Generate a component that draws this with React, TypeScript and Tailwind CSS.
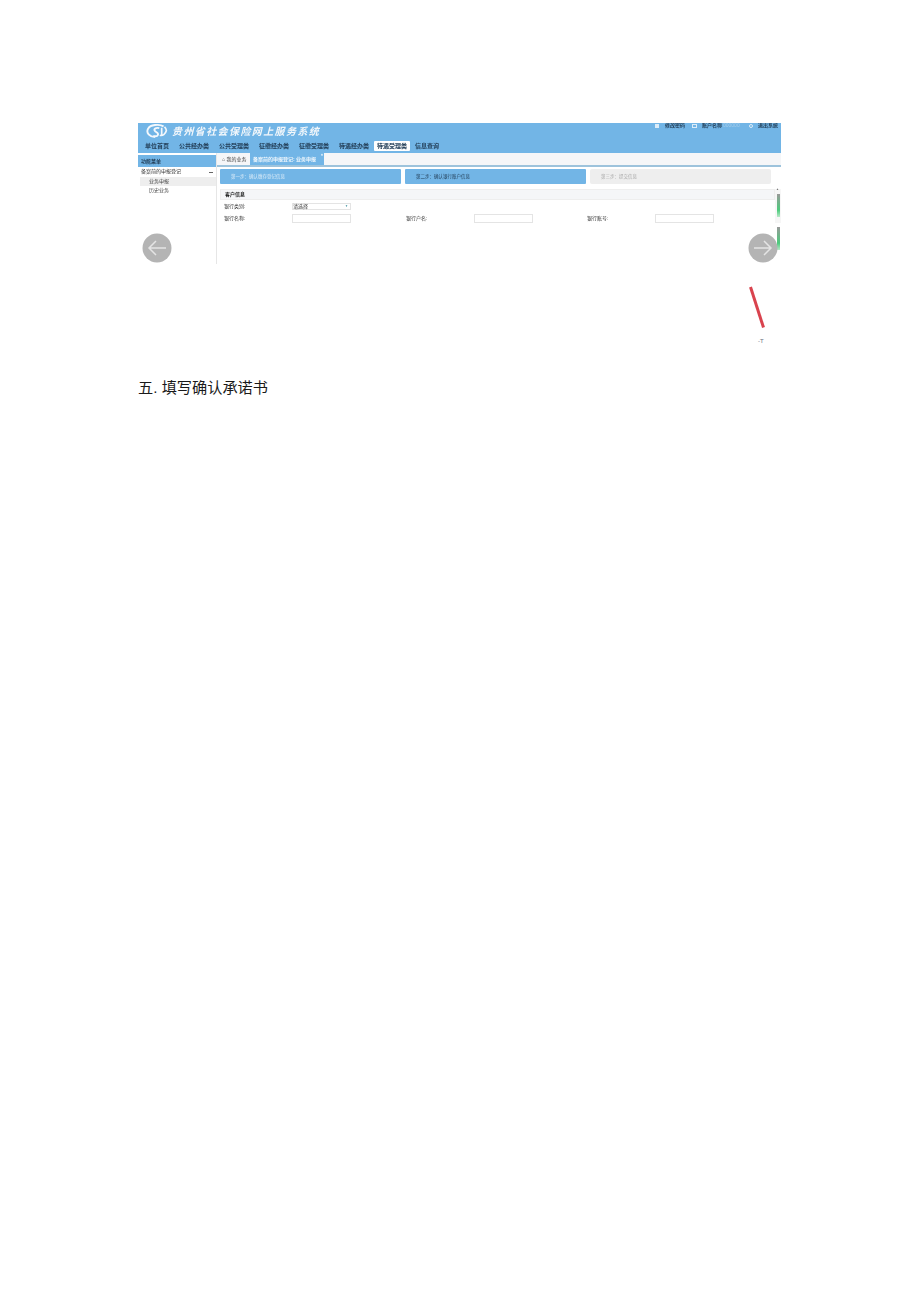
const cjk = "font-['Liberation_Sans','Noto_Sans_CJK_SC',sans-serif]";

const navItems = ["单位首页", "公共经办类", "公共受理类", "征缴经办类", "征缴受理类", "待遇经办类", "待遇受理类", "信息查询"];

function CircleArrow({ dir }: { dir: "left" | "right" }) {
  return (
    <svg width="30" height="30" viewBox="0 0 30 30">
      <circle cx="15" cy="15" r="14.5" fill="#b4b4b4" />
      {dir === "left" ? (
        <path d="M24 15H7M14 8L7 15l7 7" fill="none" stroke="#e4e4e4" strokeWidth="1.500" />
      ) : (
        <path d="M6 15h17M16 8L23 15l-7 7" fill="none" stroke="#e4e4e4" strokeWidth="1.500" />
      )}
    </svg>
  );
}

function Field({ label, className }: { label: string; className: string }) {
  return (
    <div className={`flex items-center ${className}`}>
      <span className="w-[68px] text-[5px] text-[#333]">{label}</span>
      <div className="h-[9px] w-[59px] border border-[#e4e4e4] bg-white" />
    </div>
  );
}

export default function App() {
  return (
    <div className={`${cjk} h-[1301px] w-[920px] overflow-hidden bg-white pl-[138px] pt-[123px]`}>
      <div className="relative h-[141px] w-[643px] overflow-hidden blur-[0.6px]">
        <div className="flex h-[30px] flex-col justify-between bg-[#72b5e6] pb-[2px] pl-[2px]">
          <div className="flex items-start justify-between">
            <div className="flex items-center pt-[1px]">
              <svg width="24" height="15" viewBox="0 0 24 16" className="ml-[5px]">
                <path d="M19 2.500C14 0 5 0.500 2.500 5S4 13.500 10 14" fill="none" stroke="#f4f8fc" strokeWidth="2" />
                <path d="M14.500 4.500C11 3.500 8.500 5 9.500 7S14 9 13 11.500 9 13 8 12.500" fill="none" stroke="#f4f8fc" strokeWidth="2" />
                <path d="M17 4v8M15 12c3 1 6-1 7-5 0-2-1-3-2-4" fill="none" stroke="#f4f8fc" strokeWidth="1.800" />
              </svg>
              <span className="ml-[3px] text-[10px] font-bold italic leading-[13px] tracking-[1.4px] text-[#f2f7fb]">贵州省社会保险网上服务系统</span>
            </div>
            <div className="flex items-center pr-[3px] text-[5px] font-bold leading-[5px] text-[#24405a]">
              <span className="mr-[6px] h-[4px] w-[4px] bg-[#dcecf8]" />
              <span>修改密码</span>
              <span className="ml-[7px] mr-[5px] h-[4px] w-[5px] border border-[#dcecf8]" />
              <span>账户名称</span>
              <span className="ml-[1px] w-[20px] font-normal text-[#a5cdea]">000000</span>
              <span className="ml-[6px] mr-[5px] h-[4px] w-[4px] rounded-full border border-[#dcecf8]" />
              <span>退出系统</span>
            </div>
          </div>
          <div className="flex items-center gap-[8px] pl-[4px] text-[6px] font-bold leading-[10px] text-[#24405a]">
            {navItems.map((item) => (
              <span key={item} className={item === "待遇受理类" ? "-mx-[4px] rounded-[1px] bg-white px-[3px]" : "px-[1px]"}>
                {item}
              </span>
            ))}
          </div>
        </div>

        <div className="flex h-[111px]">
          <div className="w-[79px] shrink-0 border-r border-[#e6e6e6] pt-[2px]">
            <div className="h-[12px] bg-[#72b5e6] pl-[3px] text-[5px] font-bold leading-[12px] text-[#24405a]">功能菜单</div>
            <div className="flex h-[10px] items-center justify-between pl-[3px] pr-[3px] text-[5px] text-[#333]">
              <span>备案前的申报登记</span>
              <span className="h-[1px] w-[4px] bg-[#666]" />
            </div>
            <div className="ml-[2px] h-[9px] bg-[#eeeeee] pl-[9px] text-[5px] leading-[9px] text-[#444]">业务申报</div>
            <div className="h-[9px] pl-[11px] text-[5px] leading-[9px] text-[#444]">历史业务</div>
          </div>

          <div className="min-w-0 flex-1">
            <div className="flex h-[14px] items-end border-b-2 border-[#9dc3dc] bg-[#f5f6f8] pl-[2px]">
              <span className="w-[31px] pl-[3px] text-[5px] leading-[11px] text-[#444]">⌂ 我的业务</span>
              <span className="relative h-[12px] w-[74px] bg-[#72b5e6] pl-[3px] text-[5px] font-bold leading-[12px] text-[#eef6fc]">
                备案前的申报登记: 业务申报
                <span className="absolute right-[1px] top-0 text-[4px] leading-[4px] text-white">×</span>
              </span>
            </div>

            <div className="flex gap-[4px] pl-[3px] pt-[2px]">
              <div className="h-[15px] w-[181px] rounded-[1px] bg-[#72b5e6] pl-[11px] text-[4.500px] leading-[15px] text-[#dcecf8]">第一步：确认缴存登记信息</div>
              <div className="h-[15px] w-[181px] rounded-[1px] bg-[#72b5e6] pl-[11px] text-[4.500px] leading-[15px] text-[#24405a]">第二步：确认银行账户信息</div>
              <div className="h-[15px] w-[181px] rounded-[2px] bg-[#eeeeee] pl-[11px] text-[4.500px] leading-[15px] text-[#aaa]">第三步：提交信息</div>
            </div>

            <div className="mt-[5px] flex">
              <div className="ml-[3px] flex-1">
                <div className="h-[11px] border border-[#eeeeee] bg-[#f5f6f8] pl-[4px] text-[5px] font-bold leading-[9px] text-[#222]">客户信息</div>
                <div className="mt-[1px] flex h-[11px] items-center pl-[4px]">
                  <span className="w-[68px] text-[5px] text-[#333]">银行类别:</span>
                  <div className="flex h-[7px] w-[59px] items-center justify-between border border-[#e4e4e4] pr-[2px] text-[5px] text-[#333]">
                    <span>请选择</span>
                    <span className="text-[3px] text-[#3a8f9e]">▼</span>
                  </div>
                </div>
                <div className="flex pl-[4px] pt-[2px]">
                  <Field label="银行名称:" className="" />
                  <Field label="银行户名:" className="ml-[55px]" />
                  <Field label="银行账号:" className="ml-[54px]" />
                </div>
              </div>
              <div className="relative w-[6px] shrink-0 bg-[#f6f6f6]">
                <span className="absolute left-[1px] top-[-1px] text-[3px] leading-[3px] text-[#777]">▲</span>
                <span className="absolute left-[2px] top-[5px] h-[23px] w-[3px] bg-[linear-gradient(#999,#4ccb7c_70%,#b8e8c8)]" />
                <span className="absolute left-[2px] top-[38px] h-[23px] w-[3px] bg-[linear-gradient(#999,#4ccb7c_70%,#b8e8c8)]" />
              </div>
            </div>
          </div>
        </div>

        <div className="absolute bottom-[1px] left-[4px]"><CircleArrow dir="left" /></div>
        <div className="absolute bottom-[1px] right-[3px]"><CircleArrow dir="right" /></div>
      </div>

      <div className="relative h-[114px]">
        <svg width="20" height="44" viewBox="0 0 20 44" className="absolute left-[609px] top-[22px]">
          <path d="M3.500 1L16.500 41.500" stroke="#d9434e" strokeWidth="3" fill="none" />
        </svg>
        <span className="absolute left-[620px] top-[73px] text-[6px] leading-[8px] text-[#6b7280]">-T</span>
      </div>

      <div className="text-[15.200px] leading-[20px] text-[#1a1a1a]">五. 填写确认承诺书</div>
    </div>
  );
}
